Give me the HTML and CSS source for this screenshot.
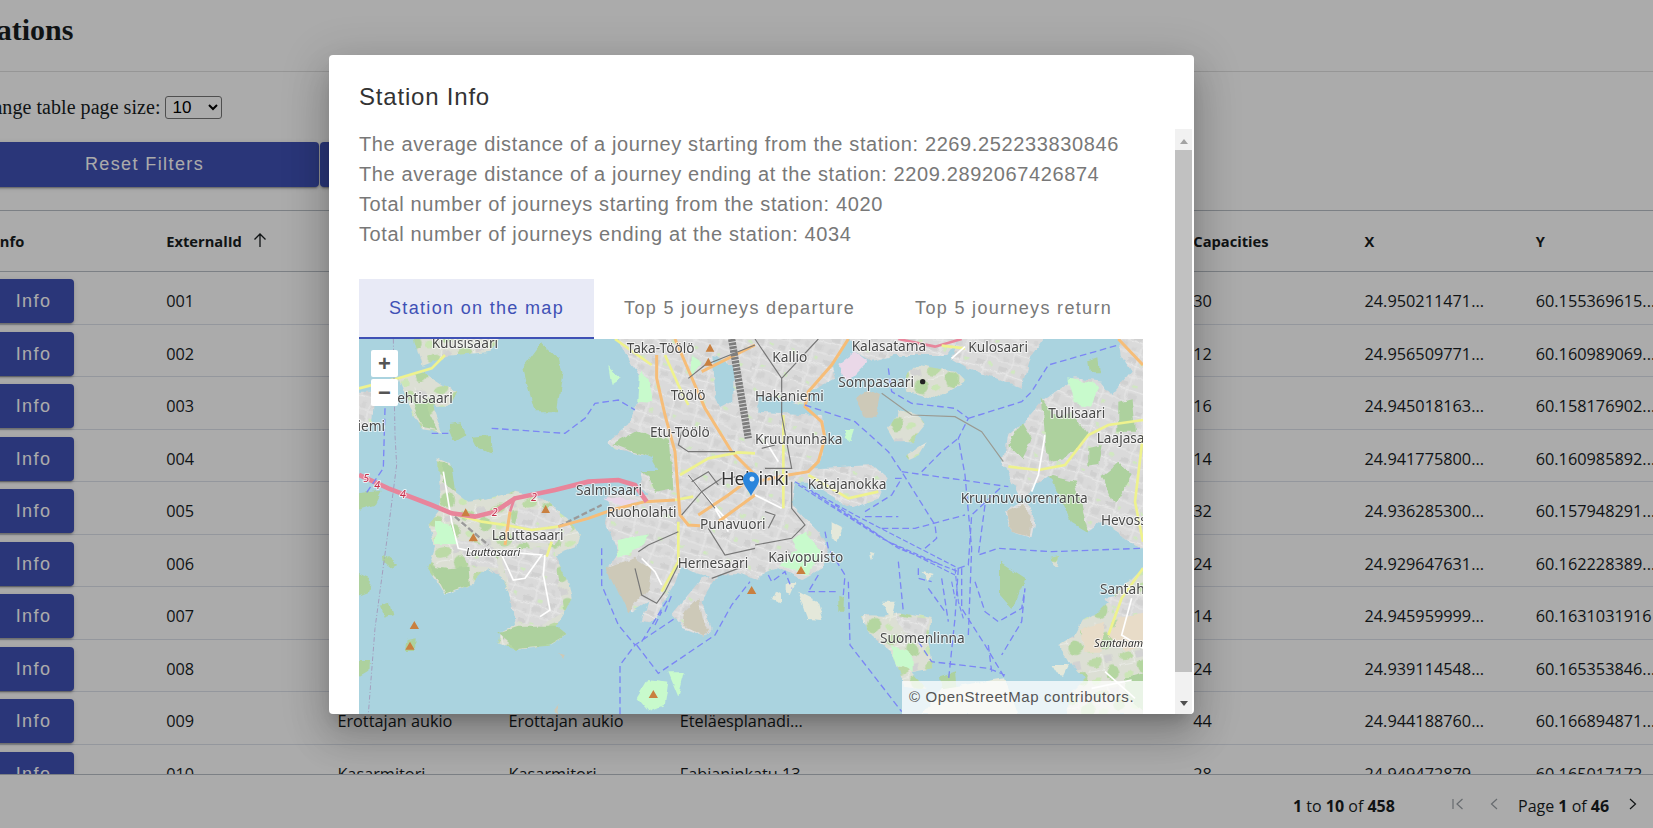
FILE: index.html
```html
<!DOCTYPE html>
<html lang="en">
<head>
<meta charset="utf-8">
<title>Stations</title>
<link rel="stylesheet" href="styles.css">
</head>
<body>
<main class="page">
  <h1 class="title">Stations</h1>
  <div class="rule"></div>
  <div class="size-row">
    <label class="size-label">Change table page size:</label>
    <select class="size-select"><option>10</option></select>
  </div>
  <div class="actions">
    <button class="btn btn-wide">Reset Filters</button>
    <button class="btn btn-next" aria-hidden="true"></button>
  </div>
  <section class="grid">
    <div class="row head">
      <div class="cell">Info</div>
      <div class="cell sort">ExternalId
        <svg class="sort-icon" viewBox="0 0 14 16"><path d="M7 15V2M1.5 7.5 7 2l5.500 5.500"/></svg>
      </div>
      <div class="cell"></div><div class="cell"></div><div class="cell"></div><div class="cell"></div><div class="cell"></div>
      <div class="cell">Capacities</div><div class="cell">X</div><div class="cell">Y</div>
    </div>
    <div class="rows">
      <div class="row"><div class="cell"><button class="btn btn-info">Info</button></div><div class="cell">001</div><div class="cell"></div><div class="cell"></div><div class="cell"></div><div class="cell"></div><div class="cell"></div><div class="cell">30</div><div class="cell">24.950211471...</div><div class="cell">60.155369615...</div></div>
      <div class="row"><div class="cell"><button class="btn btn-info">Info</button></div><div class="cell">002</div><div class="cell"></div><div class="cell"></div><div class="cell"></div><div class="cell"></div><div class="cell"></div><div class="cell">12</div><div class="cell">24.956509771...</div><div class="cell">60.160989069...</div></div>
      <div class="row"><div class="cell"><button class="btn btn-info">Info</button></div><div class="cell">003</div><div class="cell"></div><div class="cell"></div><div class="cell"></div><div class="cell"></div><div class="cell"></div><div class="cell">16</div><div class="cell">24.945018163...</div><div class="cell">60.158176902...</div></div>
      <div class="row"><div class="cell"><button class="btn btn-info">Info</button></div><div class="cell">004</div><div class="cell"></div><div class="cell"></div><div class="cell"></div><div class="cell"></div><div class="cell"></div><div class="cell">14</div><div class="cell">24.941775800...</div><div class="cell">60.160985892...</div></div>
      <div class="row"><div class="cell"><button class="btn btn-info">Info</button></div><div class="cell">005</div><div class="cell"></div><div class="cell"></div><div class="cell"></div><div class="cell"></div><div class="cell"></div><div class="cell">32</div><div class="cell">24.936285300...</div><div class="cell">60.157948291...</div></div>
      <div class="row"><div class="cell"><button class="btn btn-info">Info</button></div><div class="cell">006</div><div class="cell"></div><div class="cell"></div><div class="cell"></div><div class="cell"></div><div class="cell"></div><div class="cell">24</div><div class="cell">24.929647631...</div><div class="cell">60.162228389...</div></div>
      <div class="row"><div class="cell"><button class="btn btn-info">Info</button></div><div class="cell">007</div><div class="cell"></div><div class="cell"></div><div class="cell"></div><div class="cell"></div><div class="cell"></div><div class="cell">14</div><div class="cell">24.945959999...</div><div class="cell">60.1631031916</div></div>
      <div class="row"><div class="cell"><button class="btn btn-info">Info</button></div><div class="cell">008</div><div class="cell"></div><div class="cell"></div><div class="cell"></div><div class="cell"></div><div class="cell"></div><div class="cell">24</div><div class="cell">24.939114548...</div><div class="cell">60.165353846...</div></div>
      <div class="row"><div class="cell"><button class="btn btn-info">Info</button></div><div class="cell">009</div><div class="cell">Erottajan aukio</div><div class="cell">Erottajan aukio</div><div class="cell">Eteläesplanadi...</div><div class="cell"></div><div class="cell"></div><div class="cell">44</div><div class="cell">24.944188760...</div><div class="cell">60.166894871...</div></div>
      <div class="row"><div class="cell"><button class="btn btn-info">Info</button></div><div class="cell">010</div><div class="cell">Kasarmitori</div><div class="cell">Kasarmitori</div><div class="cell">Fabianinkatu 13</div><div class="cell"></div><div class="cell"></div><div class="cell">28</div><div class="cell">24.949472879...</div><div class="cell">60.165017172...</div></div>
    </div>
    <footer class="pager">
      <span class="pager-count"><b>1</b> to <b>10</b> of <b>458</b></span>
      <svg class="pg off first" viewBox="0 0 12 12"><path d="M1 1v10M10.500 1 5 6l5.500 5"/></svg>
      <svg class="pg off prev" viewBox="0 0 8 12"><path d="M7 1 1.500 6 7 11"/></svg>
      <span class="pager-page">Page <b>1</b> of <b>46</b></span>
      <svg class="pg next" viewBox="0 0 8 12"><path d="M1 1l5.500 5L1 11"/></svg>
    </footer>
  </section>
</main>

<div class="overlay">
  <div class="modal">
    <h2 class="modal-title">Station Info</h2>
    <div class="modal-body">
      <div class="modal-content">
        <p class="stat">The average distance of a journey starting from the station: 2269.252233830846</p>
        <p class="stat">The average distance of a journey ending at the station: 2209.2892067426874</p>
        <p class="stat">Total number of journeys starting from the station: 4020</p>
        <p class="stat">Total number of journeys ending at the station: 4034</p>
        <div class="tabs">
          <div class="tab active">Station on the map</div>
          <div class="tab">Top 5 journeys departure</div>
          <div class="tab">Top 5 journeys return</div>
        </div>
        <div class="map">
          <svg class="map-svg" viewBox="0 0 784 375" preserveAspectRatio="none">
            <defs>
              <filter id="coast" filterUnits="userSpaceOnUse" x="-12" y="-12" width="808" height="399">
                <feTurbulence type="fractalNoise" baseFrequency="0.07" numOctaves="3" seed="4" result="n"/>
                <feDisplacementMap in="SourceGraphic" in2="n" scale="7" xChannelSelector="R" yChannelSelector="G"/>
                <feGaussianBlur stdDeviation="0.6"/>
              </filter>
              <filter id="soft" filterUnits="userSpaceOnUse" x="-12" y="-12" width="808" height="399">
                <feGaussianBlur stdDeviation="0.4"/>
              </filter>
              <filter id="txt" filterUnits="userSpaceOnUse" x="-12" y="-12" width="808" height="399">
                <feGaussianBlur stdDeviation="0.25"/>
              </filter>
              <pattern id="u" width="72" height="72" patternUnits="userSpaceOnUse" patternTransform="rotate(18)">
                <rect width="72" height="72" fill="#dadada"/>
                <rect x="6" y="6" width="24" height="14" fill="#d0d0d0"/>
                <rect x="42" y="34" width="22" height="16" fill="#d2d2d2"/>
                <rect x="8" y="44" width="14" height="18" fill="#d4d4d4"/>
                <rect x="44" y="6" width="12" height="10" fill="#d0e8c0"/>
                <path d="M0 26H72M0 60H72M36 0V72" stroke="#ececec" stroke-width="2.500"/>
              </pattern>
              <pattern id="m" width="96" height="96" patternUnits="userSpaceOnUse" patternTransform="rotate(-12)">
                <rect width="96" height="96" fill="#dcdfd4"/>
                <ellipse cx="24" cy="22" rx="22" ry="14" fill="#bcdaa6"/>
                <ellipse cx="72" cy="62" rx="20" ry="22" fill="#b4d6a0"/>
                <ellipse cx="20" cy="76" rx="12" ry="10" fill="#cbe6b6"/>
                <rect x="54" y="10" width="26" height="20" fill="#d2d2d2"/>
                <path d="M0 46H50M50 0V50" stroke="#f0f0ee" stroke-width="2"/>
              </pattern>
            </defs>
            <rect class="water" width="784" height="375"/>
            <g filter="url(#coast)">
              <g transform="translate(-4 -4) scale(.33333)">
                <path fill="url(#m)" d="M170 -10H450L410 50 280 62 200 92Z"/>
                <path fill="url(#m)" d="M130 130 200 110 260 150 310 172 290 212 232 212 262 292 200 282 160 205Z"/>
                <path class="forest" d="M165 190 215 215 250 285 205 275Z"/>
                <path class="forest" d="M560 25 612 72 622 112 606 232 540 232 520 160 505 100Z"/>
                <path fill="url(#u)" d="M-10 170H60L50 270-10 300Z"/>
                <path class="forest" d="M280 270 320 265 335 300 300 320Z"/>
                <path class="forest" d="M350 305 405 300 412 358 365 335Z"/>
                <path class="forest" d="M-10 480 80 470 60 510-10 530Z"/>
                <path class="forest" d="M90 660 130 690 110 700 92 685Z"/>
                <path class="forest" d="M-10 710 45 735 40 770-10 790Z"/>
                <path class="forest" d="M72 810 105 800 115 840 90 850Z"/>
                <path class="forest" d="M-10 975 42 975 40 1010-10 1040Z"/>
                <path class="forest" d="M155 915 182 910 180 945 150 945Z"/>
                <path fill="url(#m)" d="M250 370 285 385 300 470 340 500 400 490 480 470 560 490 640 550 672 600 660 640 600 662 640 740 650 790 630 832 600 880 632 900 580 932 480 942 430 922 440 890 480 870 470 800 440 730 400 700 350 750 270 778 220 700 240 640 220 570 260 520 250 450Z"/>
                <path fill="url(#u)" d="M440 640H595L625 830 560 872 480 862 450 720Z"/>
                <path fill="url(#u)" d="M490 520 600 520 650 580 600 630 470 620Z"/>
                <path fill="url(#u)" d="M300 610 420 640 430 700 340 690Z"/>
                <path class="forest" d="M225 690 280 700 340 695 345 750 270 775Z"/>
                <path class="forest" d="M430 895 490 875 600 875 632 900 580 930 480 940Z"/>
                <path class="park" d="M240 560 290 570 310 630 240 630Z"/>
                <path class="forest" d="M265 380 290 395 300 470 262 440Z"/>
                <path fill="url(#u)" d="M780 -10H1210V735L1150 715 1090 715 1060 725 1000 705 975 700 955 760 910 830 880 865 860 860 880 800 830 830 760 700 790 660 770 600 750 560 760 500 760 480 880 480 860 460 850 410 920 410 900 370 780 340 760 320 820 270 830 240 850 200 860 130 830 90Z"/>
                <path fill="url(#u)" d="M950 840 1040 730 1090 715 1040 800 1070 880 1050 905 985 880Z"/>
                <path class="forest" d="M775 325 850 285 945 320 955 460 900 470 880 420 850 405 910 405 890 370Z"/>
                <path class="park" d="M855 110 880 130 895 205 850 200Z"/>
                <path class="park" d="M1010 60 1040 80 1010 130Z"/>
                <path class="park" d="M760 90 800 130 770 150Z"/>
                <path class="park" d="M785 615 880 595 860 640 790 668Z"/>
                <path class="sand" d="M755 700 840 668 890 700 880 760 820 835Z"/>
                <path class="sand" d="M990 830 1030 790 1040 850 1065 880 1050 905 985 870Z"/>
                <path class="water" d="M1075 65 1135 90 1135 200 1100 220 1080 180Z"/>
                <path class="land-p" d="M745 492 800 487 850 500 800 515Z"/>
                <path class="park" d="M845 1090 880 1032 940 1040 930 1110 880 1132Z"/>
                <path class="park" d="M940 1012 990 1012 970 1085Z"/>
                <path class="sand" d="M610 955 630 960 620 970Z"/>
                <path class="sand" d="M595 1125 605 1110 610 1140Z"/>
              </g>
              <g transform="translate(396 -4) scale(.33333)">
                <path fill="url(#u)" d="M-10 -10H290L230 90 240 130 160 170 150 210-10 170Z"/>
                <path fill="url(#u)" d="M-10 230 200 240 210 300 200 380 160 400 190 400 350 390 395 430 370 490 290 520 210 470 160 440 120 440 110 510 190 590 222 640 200 700 140 735 70 700 0 720-10 730Z"/>
                <path class="land-p" d="M250 90 300 50 340 80 280 140Z"/>
                <path fill="url(#u)" d="M280 -10H630L580 60 420 60 350 80 300 50Z"/>
                <path fill="url(#m)" d="M450 130 490 90 600 110 630 140 540 192 460 170Z"/>
                <path fill="url(#u)" d="M620 -10H880L830 60 800 162 720 130 640 100 590 70Z"/>
                <path fill="url(#m)" d="M395 280 430 225 490 240 512 270 470 322 420 322Z"/>
                <path fill="url(#m)" d="M455 360 512 325 492 360 465 372Z"/>
                <path class="sand" d="M300 190 340 165 375 180 360 248 330 248Z"/>
                <path class="park" d="M265 285 300 285 290 315 270 310Z"/>
                <path class="park" d="M10 620 100 625 150 590 200 650 160 720 70 690Z"/>
                <path fill="url(#u)" d="M0 590 100 590 130 640 70 690 0 700Z"/>
                <path fill="url(#u)" d="M740 390 760 300 820 250 870 190 960 130 1040 140 1070 180 1130 110 1100 60 1090 -10H1180V640L1150 640 1100 600 1040 560 1000 590 950 490 880 420 830 460 800 500 750 530 770 590 830 610 840 540 790 480 760 410Z"/>
                <path class="forest" d="M760 330 800 260 830 310 800 370Z"/>
                <path class="forest" d="M860 190 900 250 950 230 1000 300 930 370 880 380 870 300Z"/>
                <path class="forest" d="M880 420 960 440 1000 590 950 560Z"/>
                <path class="forest" d="M1040 420 1090 380 1130 420 1080 510Z"/>
                <path class="forest" d="M1000 340 1040 330 1030 390 1000 395Z"/>
                <path class="forest" d="M1090 200 1130 190 1140 290 1090 290Z"/>
                <path class="park" d="M940 130 1030 150 1005 212 960 205Z"/>
                <path class="sand" d="M755 530 800 510 830 540 825 605 770 590Z"/>
                <path class="forest" d="M1000 80 1030 70 1035 115 1005 115Z"/>
                <path class="forest" d="M735 680 812 730 772 822 735 780Z"/>
                <path fill="url(#m)" d="M890 665 915 660 910 695 893 690Z"/>
                <path fill="url(#m)" d="M1180 680 1090 770 1030 830 980 860 960 900 910 930 960 1000 990 1032 940 1082 930 1140H1180Z"/>
                <path class="land-s" d="M1100 840 1180 830 1180 920 1110 950 1060 900Z"/>
                <path class="land-s" d="M980 880 1050 860 1040 950 985 950Z"/>
                <path class="forest" d="M1110 1030 1180 1010 1180 1140 1120 1090Z"/>
                <path fill="url(#u)" d="M1050 790 1130 770 1180 790 1180 830 1090 850Z"/>
                <path fill="url(#m)" d="M320 840 380 842 430 832 530 852 520 922 532 1000 470 1012 512 1062 450 1052 420 960 350 900Z"/>
                <path fill="url(#u)" d="M425 840 520 855 515 920 440 890Z"/>
                <path class="park" d="M410 930 470 960 470 1010 430 990Z"/>
                <path class="forest" d="M555 1030 600 1015 605 1060 560 1060Z"/>
                <path class="land-n" d="M560 1060 750 1030 790 1140 500 1140Z"/>
                <path class="land-n" d="M130 770 190 800 205 855 160 852Z"/>
                <path class="land-n" d="M385 800 422 800 405 860Z"/>
                <path class="forest" d="M250 782 270 790 268 830 250 830Z"/>
                <path class="land-n" d="M230 560 265 578 250 622 230 610Z"/>
                <path class="land-n" d="M60 770 75 780 75 805 50 795Z"/>
                <path class="land-n" d="M95 745 125 745 110 780 95 775Z"/>
                <path class="land-n" d="M345 650 358 655 350 675Z"/>
                <path class="land-n" d="M500 710 530 720 515 735Z"/>
                <path class="land-n" d="M890 990 945 990 930 1020 905 1015Z"/>
              </g>
            </g>
            <g filter="url(#soft)" fill="none">
              <g transform="translate(-4 -4) scale(.33333)">
                <path class="r-white" d="M265 410 290 560 310 640 400 660 440 650 560 660 510 730 475 735 440 660M570 660 565 720 585 825 555 845"/>
                <path class="r-white" d="M860 670 900 710 920 750M1000 420 1080 520 1120 590M1040 470 1120 560"/>
                <path class="r-rail" d="M300 545 400 630M610 575 740 510"/>
                <path class="r-yellow" d="M12 160 130 130 230 100 270 60"/>
                <path class="r-yellow" d="M290 535 380 560 450 570 530 585 610 575"/>
                <path class="r-orange" d="M610 575 700 550 770 525 870 500 960 495"/>
                <path class="r-yellow" d="M960 495 1015 485"/>
                <path class="r-motor" d="M12 420 100 460 230 510 290 535 360 545 420 530 480 490 600 465 700 440 790 435 840 450 875 500"/>
                <path class="r-motor-thin" d="M480 485 465 530"/>
                <path class="r-orange" d="M465 530 450 630"/>
                <path class="r-orange" d="M905 60 905 130 930 240 960 350 970 480 975 540 1000 570 1035 572"/>
                <path class="r-yellow" d="M590 620 575 665"/>
                <path class="r-yellow" d="M970 560 970 680 920 770"/>
                <path class="r-yellow" d="M780 12 890 90"/>
                <path class="r-yellow" d="M930 60 970 150 1000 210"/>
                <path class="r-orange" d="M960 12 1050 220 1130 350 1200 420"/>
                <path class="r-yellow" d="M975 420 1060 370 1150 352 1200 355"/>
                <path class="r-orange" d="M1030 540 1120 480 1200 420M1090 560 1200 480"/>
                <path class="r-orange" d="M1040 110 1200 30"/>
                <path class="r-grey" d="M1000 130 1050 90 1200 30M980 290 970 330 1000 350 1140 350M850 650 880 630 970 590M840 700 860 780 905 805 930 770 970 690M980 540 1040 470 1100 430 1200 420M1060 580 1110 660 1200 640M1000 420 1080 520M1070 730 1150 700M1010 440 1060 410 1090 450"/>
                <path class="r-track" d="M1130 12 1180 310"/>
                <path class="r-dashdot" d="M115 12 120 300 125 390 95 620 60 880 40 1137"/>
                <path class="r-ferry" d="M230 295H280M410 280 630 295 690 250 720 205 790 195 840 225M90 220 85 400 30 480M795 1137V990L840 930 960 850M845 930 910 1015 1080 900 1130 810 1185 740M740 640V750L790 870 840 930M860 920 940 790M900 870 920 830M930 830 950 780"/>
              </g>
              <g transform="translate(396 -4) scale(.33333)">
                <path class="r-orange" d="M280 12 230 90 160 170 150 215 200 260 210 310 190 380 160 410 100 420 0 440"/>
                <path class="r-orange" d="M1090 12 1164 90"/>
                <path class="r-motor-thin" d="M430 12 540 35 620 12"/>
                <path class="r-yellow" d="M560 32 630 40"/>
                <path class="r-yellow" d="M85 240V400 520"/>
                <path class="r-yellow" d="M160 420 280 490 370 470"/>
                <path class="r-yellow" d="M760 395 850 405 930 390 1000 300 1060 270 1164 255M1164 300 1140 500 1164 620M1164 700 1100 790 1060 900"/>
                <path class="r-white" d="M590 70 630 35M870 300 850 420 830 470M1050 1010 1140 1090M1010 1060 1130 1035M1130 790 1100 900 1164 940M0 480 80 520M20 300 70 380"/>
                <path class="r-grey" d="M0 12 80 130 190 12M80 130 80 240 110 400 30 400M110 440 110 520 150 570 110 610 0 630M40 580 60 540 30 530M20 340 60 330"/>
                <path class="r-sandrail" d="M380 175 470 240 600 245 680 290 745 380"/>
                <path class="r-ferry" d="M400 100 410 170 470 205 600 220 640 250 610 310 630 420 650 640 640 900M640 250 800 200 830 170 880 90 1090 30M150 210 300 260 400 350 440 410 540 570 545 610 510 640M440 410 620 435 760 455M500 410 560 350 610 310M420 430H440L410 480 330 530M330 545H430M380 580 480 580 630 540M610 700 640 690 650 540 740 455M690 510 670 660 730 640 890 650 1160 640M610 700 600 850 580 1040M620 700 620 820 690 930 750 1030M660 740 690 830 730 860 800 820 810 760 800 860 740 960M280 740 285 930 440 1130M430 680 445 830M560 730 580 860M490 920 530 980 700 1000 750 1020M160 770H250M190 720 160 770M40 720 50 740 90 710 110 760M210 590 220 640 270 720 265 780M490 700 490 730 530 740M520 760 570 830M700 930 710 1010"/>
                <path class="r-ferry bundle" d="M120 440 300 540 610 700M130 450 380 610 600 720M170 470 430 640 610 710M240 510 400 620 560 690M600 700 610 800 625 850M590 740 600 790"/>
              </g>
            </g>
            <g filter="url(#txt)">
              <g transform="translate(-4 -4) scale(.33333)">
                <text class="lbl" x="230" y="38">Kuusisaari</text>
                <text class="lbl" x="815" y="55">Taka-Töölö</text>
                <text class="lbl" x="947" y="195">Töölö</text>
                <text class="lbl" x="105" y="205">Lehtisaari</text>
                <text class="lbl" x="90" y="288" text-anchor="end">Lehtiniemi</text>
                <text class="lbl" x="885" y="305">Etu-Töölö</text>
                <text class="lbl" x="663" y="480">Salmisaari</text>
                <text class="lbl" x="755" y="545">Ruoholahti</text>
                <text class="lbl" x="410" y="615">Lauttasaari</text>
                <text class="lbl-i" x="333" y="662">Lauttasaari</text>
                <text class="lbl" x="1035" y="582">Punavuori</text>
                <text class="lbl" x="968" y="698">Hernesaari</text>
                <text class="ref" x="25" y="440">5</text>
                <text class="ref" x="58" y="462">4</text>
                <text class="ref" x="135" y="488">4</text>
                <text class="ref" x="410" y="542">2</text>
                <text class="ref" x="528" y="498">2</text>
                <path class="peak" d="M1065 26 1078 50H1052ZM1060 68 1073 92H1047ZM332 520 345 544H319ZM572 510 585 534H559ZM355 595 369 619H341ZM178 858 192 882H164ZM165 920 179 944H151ZM895 1065 909 1089H881ZM1190 753 1204 777H1176Z"/>
              </g>
              <g transform="translate(396 -4) scale(.33333)">
                <text class="lbl" x="52" y="82">Kallio</text>
                <text class="lbl" x="290" y="48">Kalasatama</text>
                <text class="lbl" x="640" y="52">Kulosaari</text>
                <text class="lbl" x="250" y="155">Sompasaari</text>
                <text class="lbl" x="0" y="198">Hakaniemi</text>
                <text class="lbl" x="880" y="250">Tullisaari</text>
                <text class="lbl" x="1025" y="325">Laajasalo</text>
                <text class="lbl" x="0" y="327">Kruununhaka</text>
                <text class="lbl" x="158" y="462">Katajanokka</text>
                <text class="lbl" x="617" y="505">Kruunuvuorenranta</text>
                <text class="lbl" x="1038" y="570">Hevossalmi</text>
                <text class="lbl" x="40" y="680">Kaivopuisto</text>
                <text class="lbl" x="1035" y="776">Santahamina</text>
                <text class="lbl-i" x="1018" y="935">Santahamina</text>
                <text class="lbl" x="375" y="924">Suomenlinna</text>
                <text class="lbl-big" x="-102" y="450">Helsinki</text>
                <path class="peak" d="M138 693 152 717H124Z"/>
                <circle class="blot" cx="503" cy="140" r="8"/>
              </g>
            </g>
            <path class="pin" d="M392 133c-4.600 0-8 3.500-8 8 0 5 6 11 8 16 2-5 8-11 8-16 0-4.500-3.400-8-8-8Z"/>
            <circle class="pin-dot" cx="393" cy="140" r="2.500"/>
          </svg>
          <div class="zoom">
            <div class="zoom-btn">+</div>
            <div class="zoom-btn">−</div>
          </div>
          <div class="attribution">© OpenStreetMap contributors.</div>
        </div>
      </div>
      <div class="scrollbar">
        <div class="sb-btn"><span class="arrow-up"></span></div>
        <div class="sb-thumb"></div>
        <div class="sb-track"></div>
        <div class="sb-btn"><span class="arrow-down"></span></div>
      </div>
    </div>
  </div>
</div>
</body>
</html>
```

FILE: styles.css
```css
* { box-sizing: border-box; }
html, body { margin: 0; height: 100%; overflow: hidden; background: #fff; }
body { font-family: "Liberation Serif", serif; }

.page { margin-left: -30px; width: 1900px; height: 828px; color: #181d1f; }
.title { margin: 0; padding-top: 12px; height: 71px; font-size: 30px; line-height: 36px; font-weight: 700; }
.rule { height: 1px; background: #e0e0e0; }
.size-row { display: flex; align-items: center; height: 23px; margin-top: 24px; gap: 4px; font-size: 20px; }
.size-label { line-height: 23px; letter-spacing: .05px; }
.size-select { width: 57px; height: 23px; padding: 0 0 0 3px; font: 17px "Liberation Sans", sans-serif; background: #fff; border: 1px solid #767676; border-radius: 3px; color: #000; }
.actions { display: flex; margin-top: 23px; gap: 1px; }
.btn { border: 0; border-radius: 4px; background: #3f51b5; color: #fff; font-family: "Liberation Sans", sans-serif; letter-spacing: 1.4px; box-shadow: 0 3px 1px -2px rgba(0,0,0,.2), 0 2px 2px rgba(0,0,0,.14), 0 1px 5px rgba(0,0,0,.12); padding: 0; }
.btn-wide { width: 349px; height: 45px; font-size: 18px; }
.btn-next { width: 349px; height: 45px; }

.grid { margin-top: 23px; margin-left: 8px; font-family: "Open Sans", sans-serif; font-size: 16.300px; }
.row { display: grid; grid-template-columns: repeat(10, 171.2px); height: 52.5px; border-bottom: 1px solid #dde2eb; }
.head { height: 62px; border-top: 1px solid #babfc7; border-bottom: 1px solid #babfc7; font-weight: 700; font-size: 14.700px; width: 1712px; }
.head .cell { line-height: 60px; }
.cell { padding-left: 17px; line-height: 58px; white-space: nowrap; }
.sort { display: flex; align-items: center; gap: 11px; }
.sort-icon { width: 14px; height: 16px; margin-top: -3px; fill: none; stroke: #181d1f; stroke-width: 1.300; }
.rows { height: 502px; overflow: hidden; }
.btn-info { display: block; margin: 7px 0 0 -2px; width: 81px; height: 44px; font-size: 18px; line-height: 44px; }

.pager { display: flex; align-items: center; height: 54px; padding-top: 8px; border-top: 1px solid #babfc7; font-size: 16px; }
.pager-count { margin-left: 1315px; width: 102px; white-space: nowrap; }
.pg { fill: none; stroke: #181d1f; stroke-width: 1.200; flex: none; margin-top: -4px; }
.pg.off { stroke: #9aa0a6; }
.first { width: 12px; height: 12px; margin-left: 57px; }
.prev { width: 8px; height: 12px; margin-left: 26px; }
.pager-page { margin-left: 20px; width: 92px; white-space: nowrap; }
.next { width: 8px; height: 12px; margin-left: 19px; }

.overlay { position: absolute; inset: 0; background: rgba(0,0,0,.33); }
.modal { position: absolute; left: 329px; top: 55px; width: 865px; height: 659px; background: #fff; border-radius: 4px; font-family: "Liberation Sans", sans-serif; box-shadow: 0 11px 15px -7px rgba(0,0,0,.2), 0 24px 38px 3px rgba(0,0,0,.14), 0 9px 46px 8px rgba(0,0,0,.12); overflow: hidden; }
.modal-title { margin: 0; height: 74px; padding: 25px 30px 0; font-size: 24px; line-height: 34px; font-weight: 400; letter-spacing: .8px; color: #333; }
.modal-body { display: flex; height: 585px; padding-right: 2px; }
.modal-content { flex: 1; overflow: hidden; padding: 0 32px 0 30px; }
.stat { margin: 0; font-size: 20px; line-height: 30px; letter-spacing: .62px; color: #787878; white-space: nowrap; }
.tabs { display: flex; margin-top: 30px; height: 60px; }
.tab { padding: 0 30px; font-size: 18px; letter-spacing: 1.33px; line-height: 58px; color: #787878; white-space: nowrap; }
.tab.active { background: #e8eaf6; color: #3f51b5; border-bottom: 2px solid #3f51b5; }
.map { position: relative; width: 784px; height: 375px; overflow: hidden; }
.map-svg { display: block; width: 784px; height: 375px; }
.water { fill: #aad3df; }
.land-n { fill: #e4e8da; }
.land-s { fill: #e8dcc8; }
.land-p { fill: #ead8e8; }
.forest { fill: #add19e; }
.park { fill: #c8facc; }
.sand { fill: #cdc9b8; }
.r-white { stroke: #fff; stroke-width: 5; }
.r-rail { stroke: #9a9a9a; stroke-width: 7; stroke-dasharray: 18 8; }
.r-yellow { stroke: #eef28e; stroke-width: 8; }
.r-orange { stroke: #f6bd78; stroke-width: 9; }
.r-motor { stroke: #e8859b; stroke-width: 14; }
.r-motor-thin { stroke: #e8859b; stroke-width: 8; }
.r-grey { stroke: #777; stroke-width: 3.500; }
.r-sandrail { stroke: #9a9a92; stroke-width: 3.500; }
.r-track { stroke: #7d7d7d; stroke-width: 22; stroke-dasharray: 8 3; }
.r-dashdot { stroke: #a49fbe; stroke-width: 3; stroke-dasharray: 14 6 3 6; }
.r-ferry { stroke: #7b86f5; stroke-width: 4; stroke-dasharray: 20 11; }
.bundle { stroke-width: 3.500; stroke-dasharray: 16 7; }
.lbl, .lbl-i, .lbl-big, .ref { font-family: "Noto Sans", sans-serif; paint-order: stroke; stroke: rgba(255,255,255,.7); stroke-width: 6px; stroke-linejoin: round; fill: #4a4a4a; }
.lbl { font-size: 41px; }
.lbl-i { font-size: 32px; font-style: italic; fill: #333; }
.lbl-big { font-size: 55px; fill: #333; }
.ref { font-size: 32px; font-style: italic; fill: #c4304e; }
.peak { fill: #c9803f; }
.blot { fill: #222; }
.pin { fill: #2a85dc; }
.pin-dot { fill: #e8f1f8; }
.zoom { position: absolute; left: 12px; top: 11px; display: flex; flex-direction: column; gap: 2px; }
.zoom-btn { width: 27px; height: 27px; background: #fff; border-radius: 2px; text-align: center; font: 700 22px/28px "Liberation Sans", sans-serif; color: #555; }
.attribution { position: absolute; right: 0; bottom: 0; width: 241px; height: 33px; padding-left: 7px; line-height: 31px; font-size: 15px; letter-spacing: .6px; background: rgba(255,255,255,.75); color: #555; white-space: nowrap; }
.scrollbar { display: flex; flex-direction: column; width: 17px; background: #f1f1f1; flex: none; }
.sb-btn { height: 21px; display: flex; align-items: center; justify-content: center; flex: none; }
.sb-thumb { height: 522px; background: #c1c1c1; flex: none; }
.sb-track { flex: 1; }
.arrow-up { border: 4px solid transparent; border-top: 0; border-bottom: 5px solid #a3a3a3; margin-top: 3px; }
.arrow-down { border: 4px solid transparent; border-bottom: 0; border-top: 5px solid #505050; }
```
